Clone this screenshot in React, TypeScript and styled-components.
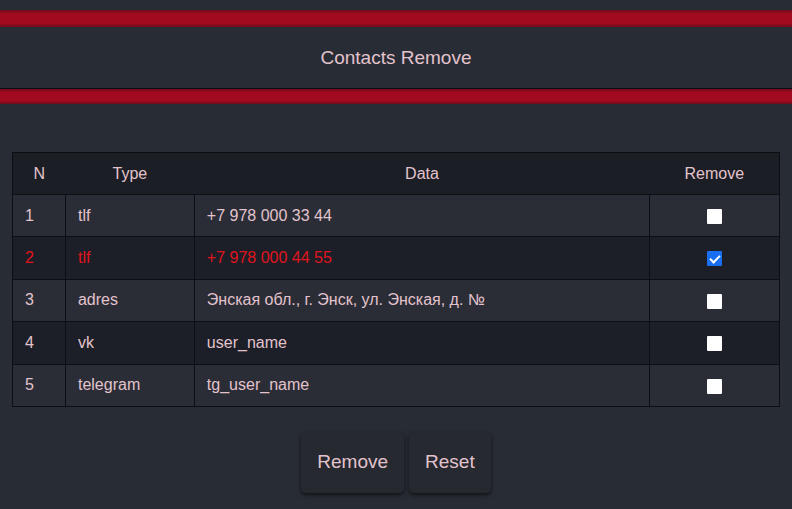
import React, { useState } from "react";
import styled, { createGlobalStyle } from "styled-components";

const Global = createGlobalStyle`
  html, body { margin: 0; padding: 0; background: #282c34; }
  body { font-family: "Liberation Sans", Arial, sans-serif; color: #e3c3cd; }
  * { box-sizing: border-box; }
`;

const Page = styled.div`
  min-height: 509px;
  background: #282c34;
  padding-top: 10px;
`;

const RedBar = styled.div<{ $h: number }>`
  height: ${(p) => p.$h}px;
  background: linear-gradient(
    to bottom,
    #6e0b1a 0%,
    #a10a1f 22%,
    #a10a1f 78%,
    #6e0b1a 100%
  );
`;

const HeaderBody = styled.div`
  height: 62px;
  display: flex;
  align-items: center;
  justify-content: center;
  background: #282c34;
  font-size: 19px;
  color: #e3c3cd;
  padding-top: 1px;
  border-bottom: 1px solid #0c0d10;
`;

const Table = styled.table`
  width: 768px;
  margin: 48px auto 0;
  border-collapse: collapse;
  font-size: 16px;
  border: 1px solid #0c0e12;
`;

const HeadCell = styled.th`
  height: 42px;
  background: #1b1e25;
  font-weight: normal;
  color: #e3c3cd;
  text-align: center;
  padding: 0;
`;

const Row = styled.tr<{ $odd: boolean; $active: boolean }>`
  background: ${(p) => (p.$odd ? "#2a2d36" : "#1c1f27")};
  color: ${(p) => (p.$active ? "#e0141e" : "#e3c3cd")};
`;

const Cell = styled.td<{ $center?: boolean }>`
  height: 42.4px;
  border: 1px solid #0c0e12;
  padding: 0 12px;
  text-align: ${(p) => (p.$center ? "center" : "left")};
  vertical-align: middle;
`;

const Check = styled.input`
  appearance: none;
  -webkit-appearance: none;
  position: relative;
  width: 15px;
  height: 15px;
  margin: 0;
  vertical-align: middle;
  background: #ffffff;
  border-radius: 1px;
  cursor: pointer;

  &:checked {
    background: #1a6ef0;
  }
  &:checked::after {
    content: "";
    position: absolute;
    left: 5px;
    top: 2px;
    width: 4px;
    height: 8px;
    border: solid #ffffff;
    border-width: 0 2px 2px 0;
    transform: rotate(45deg);
  }
`;

const Buttons = styled.div`
  display: flex;
  justify-content: center;
  gap: 5px;
  margin-top: 25px;
`;

const Button = styled.button`
  height: 61px;
  padding: 0 16px;
  background: #262930;
  color: #e3c3cd;
  border: none;
  border-radius: 5px;
  font-family: "Liberation Sans", Arial, sans-serif;
  font-size: 19px;
  box-shadow: 0 2px 4px rgba(0, 0, 0, 0.6);
  cursor: pointer;
`;

const rows = [
  { n: 1, type: "tlf", data: "+7 978 000 33 44", checked: false },
  { n: 2, type: "tlf", data: "+7 978 000 44 55", checked: true },
  { n: 3, type: "adres", data: "Энская обл., г. Энск, ул. Энская, д. №", checked: false },
  { n: 4, type: "vk", data: "user_name", checked: false },
  { n: 5, type: "telegram", data: "tg_user_name", checked: false },
];

export default function App() {
  const [checks, setChecks] = useState(rows.map((r) => r.checked));
  return (
    <Page>
      <Global />
      <RedBar $h={17} />
      <HeaderBody>Contacts Remove</HeaderBody>
      <RedBar $h={15} />
      <Table>
        <colgroup>
          <col style={{ width: 53 }} />
          <col style={{ width: 129 }} />
          <col style={{ width: 456 }} />
          <col style={{ width: 130 }} />
        </colgroup>
        <thead>
          <tr>
            <HeadCell>N</HeadCell>
            <HeadCell>Type</HeadCell>
            <HeadCell>Data</HeadCell>
            <HeadCell>Remove</HeadCell>
          </tr>
        </thead>
        <tbody>
          {rows.map((r, i) => (
            <Row key={r.n} $odd={i % 2 === 0} $active={checks[i]}>
              <Cell>{r.n}</Cell>
              <Cell>{r.type}</Cell>
              <Cell>{r.data}</Cell>
              <Cell $center>
                <Check
                  type="checkbox"
                  checked={checks[i]}
                  onChange={() =>
                    setChecks((c) => c.map((v, j) => (j === i ? !v : v)))
                  }
                />
              </Cell>
            </Row>
          ))}
        </tbody>
      </Table>
      <Buttons>
        <Button>Remove</Button>
        <Button>Reset</Button>
      </Buttons>
    </Page>
  );
}
